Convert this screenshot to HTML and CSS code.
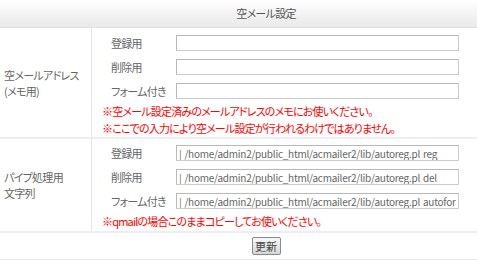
FILE: index.html
```html
<!DOCTYPE HTML>
<html lang="ja">
  <head>
    <title>空メール設定</title>
    <meta charset="utf-8">
    <link rel="stylesheet" href="styles.css">
  </head>
  <body>

  <div id="settings">
    <div class="head">空メール設定</div>

    <div class="row row-memo">
      <div class="row-label">空メールアドレス<br>(メモ用)</div>
      <div class="row-body">
        <div class="field"><span class="field-name">登録用</span><input type="text" class="text"></div>
        <div class="field"><span class="field-name">削除用</span><input type="text" class="text"></div>
        <div class="field"><span class="field-name">フォーム付き</span><input type="text" class="text"></div>
        <div class="note">※空メール設定済みのメールアドレスのメモにお使いください。</div>
        <div class="note">※ここでの入力により空メール設定が行われるわけではありません。</div>
      </div>
    </div>

    <div class="row row-pipe">
      <div class="row-label">パイプ処理用<br>文字列</div>
      <div class="row-body">
        <div class="field"><span class="field-name">登録用</span><input type="text" class="text" value="| /home/admin2/public_html/acmailer2/lib/autoreg.pl reg"></div>
        <div class="field"><span class="field-name">削除用</span><input type="text" class="text" value="| /home/admin2/public_html/acmailer2/lib/autoreg.pl del"></div>
        <div class="field"><span class="field-name">フォーム付き</span><input type="text" class="text" value="| /home/admin2/public_html/acmailer2/lib/autoreg.pl autoform"></div>
        <div class="note">※qmailの場合このままコピーしてお使いください。</div>
      </div>
    </div>

    <div class="submit">
      <button type="button" class="btn">更新</button>
    </div>
  </div>

  </body>
</html>
```

FILE: styles.css
```css
html {
  overflow: hidden;
}
body {
  margin: 0;
  padding: 0;
  background: #ffffff;
  color: #666666;
  font-family: "Noto Sans CJK JP", "Noto Sans", sans-serif;
  font-feature-settings: "palt";
  font-size: 11px;
  letter-spacing: -0.7px;
}

#settings {
  width: 532px;
}

.head {
  height: 27px;
  line-height: 27px;
  text-align: center;
  color: #555;
  background: linear-gradient(#ffffff, #e9e9e9);
  border-bottom: 1px solid #e0e0e0;
}

.row {
  display: grid;
  grid-template-columns: 92px 1fr;
  border-bottom: 2px solid #eeeeee;
}

.row-label {
  display: flex;
  align-items: center;
  padding-left: 4px;
  line-height: 16px;
  border-right: 1px solid #e6e6e6;
}

.row-body {
  padding: 3px 0 0 19px;
}
.row-pipe .row-body {
  padding-top: 2px;
  padding-bottom: 1px;
}

.field {
  display: flex;
  align-items: center;
  height: 24px;
}

.field-name {
  width: 65px;
}

.text {
  box-sizing: border-box;
  width: 283px;
  height: 16px;
  margin: 0;
  padding: 0 2px;
  border: 1px solid #cccccc;
  border-top-color: #b8b8b8;
  border-left-color: #b8b8b8;
  font-family: "Noto Sans CJK JP", sans-serif;
  font-feature-settings: normal;
  font-size: 10px;
  letter-spacing: -0.25px;
  word-spacing: 1px;
  color: #666;
}

.note {
  color: #ff0000;
  line-height: 17px;
  margin-left: -9px;
  letter-spacing: -0.8px;
}

.submit {
  display: flex;
  justify-content: center;
  align-items: center;
  height: 26px;
  border-bottom: 1px solid #e6e6e6;
}

.btn {
  height: 18px;
  width: 29px;
  padding: 0;
  font-family: "Noto Sans CJK JP", sans-serif;
  font-size: 11px;
  letter-spacing: 0;
  color: #444;
  background: linear-gradient(#f8f8f8, #d6d6d6);
  border: 1px solid #8a8a8a;
  border-radius: 2px;
}
```
